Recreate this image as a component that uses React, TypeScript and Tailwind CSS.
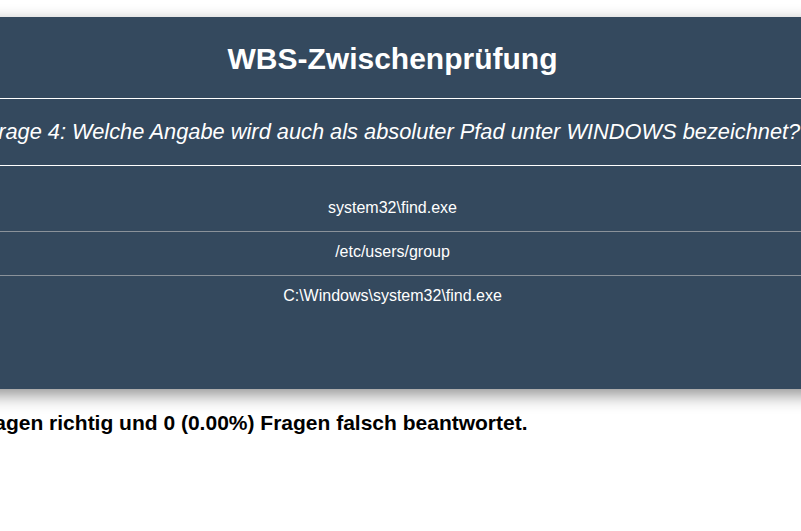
export default function App() {
  const options = ["system32\\find.exe", "/etc/users/group", "C:\\Windows\\system32\\find.exe"];
  return (
    <div className="w-full min-h-[531px] overflow-hidden bg-white" style={{ fontFamily: '"Liberation Sans", Arial, sans-serif' }}>
      <div className="pt-[17px] ml-[-256px] w-[1297px]">
        <div className="bg-[#34495e] text-white text-center shadow-[0_6px_16px_rgba(0,0,0,0.43)]">
          <div className="pt-[25px] pb-[22px] border-b border-white">
            <h1 className="text-[30px] leading-[34px] font-bold">WBS-Zwischenprüfung</h1>
          </div>
          <div className="py-[20px] border-b border-white">
            <p className="text-[21.8px] leading-[26px] italic whitespace-nowrap">
              Frage 4: Welche Angabe wird auch als absoluter Pfad unter WINDOWS bezeichnet?
            </p>
          </div>
          <div className="pt-[22px] pb-[70px]">
            {options.map((o, i) => (
              <div
                key={o}
                className={
                  i < options.length - 1
                    ? "pt-[10px] pb-[14px] text-[16px] leading-[19px] border-b border-[#8a929a]"
                    : "pt-[10px] pb-[14px] text-[16px] leading-[19px]"
                }
              >
                {o}
              </div>
            ))}
          </div>
        </div>
        <p className="mt-[22px] pl-[4px] text-[21px] leading-[24px] font-bold text-black whitespace-nowrap">
          Sie haben 3 (100.00%) Fragen richtig und 0 (0.00%) Fragen falsch beantwortet.
        </p>
      </div>
    </div>
  );
}
